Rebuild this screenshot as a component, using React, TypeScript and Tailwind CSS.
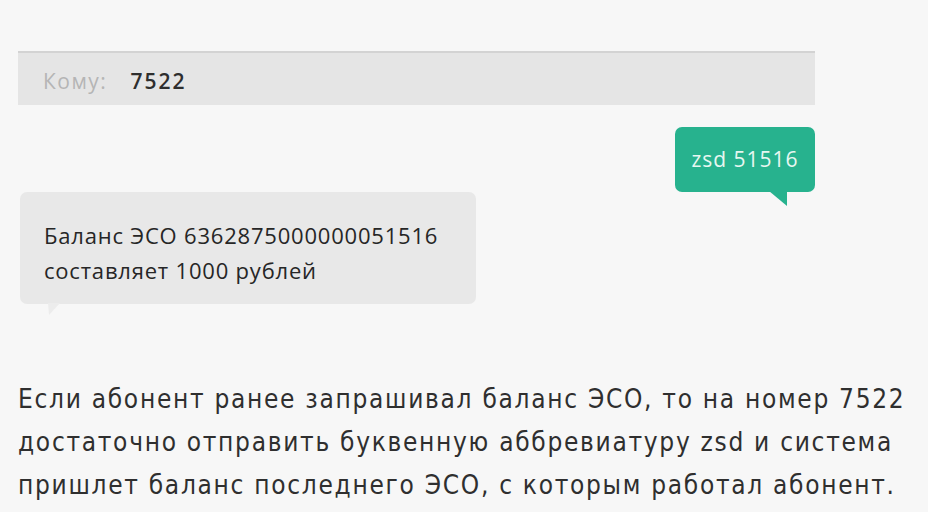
import React from 'react';

export default function App() {
  return (
    <div className="w-[928px] h-[512px] bg-[#f7f7f7] overflow-hidden" style={{ fontFamily: '"Open Sans", sans-serif' }}>
      <div className="pt-[51px] pl-[18px] w-[815px]">
        <div className="h-[54px] bg-[#e5e5e5] border-t-2 border-[#d3d3d3] flex items-center pl-[25px] pt-[6px] gap-[23px]">
          <span className="text-[21px] tracking-[1.5px] text-[#b5b5b5]">Кому:</span>
          <span className="text-[21px] tracking-[2px] font-semibold text-[#2e2e2e]">7522</span>
        </div>
      </div>

      <div className="flex justify-end w-[815px] mt-[22px]">
        <div className="relative w-[140px] h-[65px] rounded-[7px] bg-[#27b28e] flex items-center justify-center">
          <span className="text-[21px] text-[#e6f7f1] tracking-[1px]">zsd 51516</span>
          <svg className="absolute left-[94px] top-[64px]" width="19" height="16" viewBox="0 0 19 16">
            <path d="M0 0 L18 0 L18 15 Z" fill="#27b28e" />
          </svg>
        </div>
      </div>

      <div className="pl-[20px]">
        <div className="relative w-[456px] h-[112px] rounded-[7px] bg-[#e8e8e8] pl-[24px] pt-[26px]">
          <p className="text-[22px] leading-[35px] tracking-[0.8px] text-[#262626]">
            Баланс ЭСО 6362875000000051516
            <br />
            составляет 1000 рублей
          </p>
          <svg className="absolute left-[28px] top-[111px]" width="12" height="13" viewBox="0 0 12 13">
            <path d="M0 0 L12 0 L1 12 Z" fill="#ececec" />
          </svg>
        </div>
      </div>

      <p
        className="mt-[74px] pl-[18px] text-[26px] leading-[43px] tracking-[1.7px] text-[#2f2f2f]"
        style={{ fontFamily: '"DejaVu Sans Condensed", "DejaVu Sans", sans-serif' }}
      >
        Если абонент ранее запрашивал баланс ЭСО, то на номер 7522
        <br />
        достаточно отправить буквенную аббревиатуру zsd и система
        <br />
        пришлет баланс последнего ЭСО, с которым работал абонент.
      </p>
    </div>
  );
}
